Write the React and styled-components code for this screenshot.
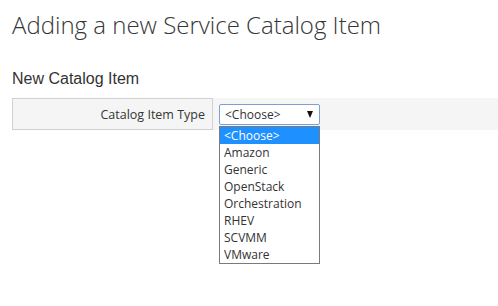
import React from 'react'
import styled, { createGlobalStyle } from 'styled-components'

const Global = createGlobalStyle`
  html, body {
    margin: 0;
    min-height: 100%;
    background: #ffffff;
    font-family: "Open Sans", sans-serif;
    color: #333333;
  }
`

const Page = styled.main`
  box-sizing: border-box;
  min-height: 306px;
  padding: 8px 0 0 12px;
`

const Title = styled.h1`
  margin: 0;
  font-family: "Open Sans", sans-serif;
  font-weight: 300;
  font-size: 24px;
  line-height: 33px;
  color: #363636;
`

const SectionTitle = styled.h3`
  margin: 29px 0 0;
  font-family: "Liberation Sans", Arial, sans-serif;
  font-weight: 400;
  font-size: 16px;
  line-height: 18px;
  color: #333333;
`

const FormRow = styled.div`
  display: flex;
  align-items: center;
  margin-top: 10px;
  height: 32px;
  background: #f5f5f5;
`

const Label = styled.label`
  box-sizing: border-box;
  width: 201px;
  height: 32px;
  padding-right: 7px;
  display: flex;
  align-items: center;
  justify-content: flex-end;
  border: 1px solid #d1d1d1;
  font-size: 12.5px;
  color: #363636;
`

const SelectWrap = styled.div`
  position: relative;
  margin-left: 6px;
`

const SelectBox = styled.div`
  box-sizing: border-box;
  width: 101px;
  height: 21px;
  padding: 0 6px 0 5px;
  display: flex;
  align-items: center;
  justify-content: space-between;
  background: #ffffff;
  border: 1px solid #7aa0d6;
  border-radius: 2px;
  font-size: 12px;
  color: #333333;
`

const Caret = styled.span`
  width: 0;
  height: 0;
  border-left: 3.5px solid transparent;
  border-right: 3.5px solid transparent;
  border-top: 7px solid #111111;
`

const Options = styled.ul`
  position: absolute;
  z-index: 10;
  top: 22px;
  left: 0;
  box-sizing: border-box;
  width: 101px;
  margin: 0;
  padding: 0;
  list-style: none;
  background: #ffffff;
  border: 1px solid #7a7a7a;
`

const Option = styled.li`
  height: 17px;
  line-height: 17px;
  padding-left: 4px;
  font-size: 12px;
  color: ${p => (p.$active ? '#ffffff' : '#333333')};
  background: ${p => (p.$active ? '#1e90ff' : 'transparent')};
`

const types = ['<Choose>', 'Amazon', 'Generic', 'OpenStack', 'Orchestration', 'RHEV', 'SCVMM', 'VMware']

export default function App() {
  return (
    <Page>
      <Global />
      <Title>Adding a new Service Catalog Item</Title>
      <SectionTitle>New Catalog Item</SectionTitle>
      <FormRow>
        <Label>Catalog Item Type</Label>
        <SelectWrap>
          <SelectBox>
            <span>&lt;Choose&gt;</span>
            <Caret />
          </SelectBox>
          <Options>
            {types.map((t, i) => (
              <Option key={t} $active={i === 0}>{t}</Option>
            ))}
          </Options>
        </SelectWrap>
      </FormRow>
    </Page>
  )
}
